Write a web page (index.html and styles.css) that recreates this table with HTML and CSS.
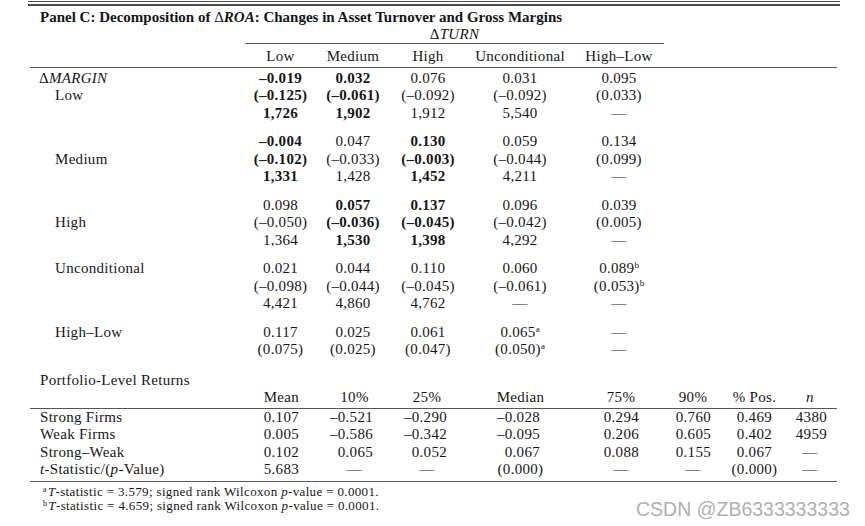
FILE: index.html
```html
<!DOCTYPE html>
<html lang="en">
<head>
<meta charset="utf-8">
<title>Panel C</title>
<link rel="stylesheet" href="styles.css">
</head>
<body>
<div class="page">
  <div class="toprule"></div>
  <div class="title">Panel C: Decomposition of <span class="delta">Δ</span><i>ROA</i>: Changes in Asset Turnover and Gross Margins</div>

  <div class="trow thead1"><span class="turn">Δ<i>TURN</i></span></div>
  <div class="trow thead2"><span></span><span>Low</span><span>Medium</span><span>High</span><span>Unconditional</span><span>High–Low</span></div>

  <div class="grp first">
    <div class="trow"><span class="lab top">Δ<i>MARGIN</i></span><span class="b">–0.019</span><span class="b">0.032</span><span>0.076</span><span>0.031</span><span>0.095</span></div>
    <div class="trow"><span class="lab">Low</span><span class="b">(–0.125)</span><span class="b">(–0.061)</span><span>(–0.092)</span><span>(–0.092)</span><span>(0.033)</span></div>
    <div class="trow"><span class="lab"></span><span class="b">1,726</span><span class="b">1,902</span><span>1,912</span><span>5,540</span><span>—</span></div>
  </div>

  <div class="grp">
    <div class="trow"><span class="lab"></span><span class="b">–0.004</span><span>0.047</span><span class="b">0.130</span><span>0.059</span><span>0.134</span></div>
    <div class="trow"><span class="lab">Medium</span><span class="b">(–0.102)</span><span>(–0.033)</span><span class="b">(–0.003)</span><span>(–0.044)</span><span>(0.099)</span></div>
    <div class="trow"><span class="lab"></span><span class="b">1,331</span><span>1,428</span><span class="b">1,452</span><span>4,211</span><span>—</span></div>
  </div>

  <div class="grp">
    <div class="trow"><span class="lab"></span><span>0.098</span><span class="b">0.057</span><span class="b">0.137</span><span>0.096</span><span>0.039</span></div>
    <div class="trow"><span class="lab">High</span><span>(–0.050)</span><span class="b">(–0.036)</span><span class="b">(–0.045)</span><span>(–0.042)</span><span>(0.005)</span></div>
    <div class="trow"><span class="lab"></span><span>1,364</span><span class="b">1,530</span><span class="b">1,398</span><span>4,292</span><span>—</span></div>
  </div>

  <div class="grp">
    <div class="trow"><span class="lab">Unconditional</span><span>0.021</span><span>0.044</span><span>0.110</span><span>0.060</span><span>0.089<span class="sup">b</span></span></div>
    <div class="trow"><span class="lab"></span><span>(–0.098)</span><span>(–0.044)</span><span>(–0.045)</span><span>(–0.061)</span><span>(0.053)<span class="sup">b</span></span></div>
    <div class="trow"><span class="lab"></span><span>4,421</span><span>4,860</span><span>4,762</span><span>—</span><span>—</span></div>
  </div>

  <div class="grp">
    <div class="trow"><span class="lab">High–Low</span><span>0.117</span><span>0.025</span><span>0.061</span><span>0.065<span class="sup">a</span></span><span>—</span></div>
    <div class="trow"><span class="lab"></span><span>(0.075)</span><span>(0.025)</span><span>(0.047)</span><span>(0.050)<span class="sup">a</span></span><span>—</span></div>
  </div>

  <div class="ptitle">Portfolio-Level Returns</div>
  <div class="brow bhead"><span></span><span>Mean</span><span>10%</span><span>25%</span><span>Median</span><span>75%</span><span>90%</span><span>% Pos.</span><span><i>n</i></span></div>
  <div class="bbody">
    <div class="brow"><span class="lab">Strong Firms</span><span class="n">0.107</span><span class="n">–0.521</span><span class="n">–0.290</span><span class="n">–0.028</span><span class="n">0.294</span><span class="n">0.760</span><span class="n">0.469</span><span class="n">4380</span></div>
    <div class="brow"><span class="lab">Weak Firms</span><span class="n">0.005</span><span class="n">–0.586</span><span class="n">–0.342</span><span class="n">–0.095</span><span class="n">0.206</span><span class="n">0.605</span><span class="n">0.402</span><span class="n">4959</span></div>
    <div class="brow"><span class="lab">Strong–Weak</span><span class="n">0.102</span><span class="n">0.065</span><span class="n">0.052</span><span class="n">0.067</span><span class="n">0.088</span><span class="n">0.155</span><span class="n">0.067</span><span>—</span></div>
    <div class="brow"><span class="lab"><i>t</i>-Statistic/(<i>p</i>-Value)</span><span class="n">5.683</span><span>—</span><span>—</span><span>(0.000)</span><span>—</span><span>—</span><span>(0.000)</span><span>—</span></div>
  </div>
  <div class="notes">
    <div><span class="fsup">a</span><i>T</i>-statistic = 3.579; signed rank Wilcoxon <i>p</i>-value = 0.0001.</div>
    <div><span class="fsup">b</span><i>T</i>-statistic = 4.659; signed rank Wilcoxon <i>p</i>-value = 0.0001.</div>
  </div>
</div>
<div class="watermark">CSDN @ZB6333333333</div>
</body>
</html>
```

FILE: styles.css
```css
html, body {
  margin: 0;
  padding: 0;
  background: #ffffff;
}
body {
  padding-top: 1px;
  font-family: "Liberation Serif", "Times New Roman", serif;
  font-size: 15px;
  color: #161616;
  letter-spacing: 0.3px;
}
.page {
  margin-left: 30px;
  width: 807px;
}
.toprule {
  margin: 0 -3px 0 -2px;
  height: 2px;
  border-top: 1px solid #555;
  border-bottom: 2px solid #4a4a4a;
}
.title {
  margin-top: 3px;
  padding-left: 10px;
  line-height: 17px;
  font-weight: bold;
  letter-spacing: 0;
}
.delta {
  font-weight: normal;
}
.trow {
  display: grid;
  grid-template-columns: 215px 71px 74px 76px 108px 90px 1fr;
  text-align: center;
  line-height: 17.5px;
  white-space: nowrap;
}
.thead1 {
  line-height: 17px;
}
.turn {
  grid-column: 2 / 7;
  border-bottom: 1px solid #555;
}
.thead2 {
  line-height: 17px;
  padding-top: 4px;
  padding-bottom: 2px;
  border-bottom: 1px solid #555;
}
.grp {
  margin-top: 11px;
}
.grp.first {
  margin-top: 1.5px;
}
.lab {
  text-align: left;
  padding-left: 25px;
}
.lab.top {
  padding-left: 9px;
}
.b {
  font-weight: bold;
}
.sup {
  font-size: 9px;
  vertical-align: 5px;
  line-height: 0;
  letter-spacing: 0;
}
.ptitle {
  margin-top: 13px;
  padding-left: 10px;
  line-height: 17px;
}
.brow {
  display: grid;
  grid-template-columns: 219px 65px 81px 64px 123px 78px 66px 57px 54px;
  text-align: center;
  white-space: nowrap;
  line-height: 17.3px;
}
.brow .lab {
  padding-left: 10px;
}
.bhead {
  line-height: 17px;
  padding-bottom: 2.5px;
  border-bottom: 1px solid #555;
}
.bhead > :nth-child(2) {
  text-align: right;
  padding-right: 15px;
}
.bbody {
  padding-bottom: 3px;
  border-bottom: 1px solid #555;
}
.brow .n {
  text-align: right;
}
.brow > .n:nth-child(2) { padding-right: 15px; }
.brow > .n:nth-child(3) { padding-right: 22px; }
.brow > .n:nth-child(4) { padding-right: 12px; }
.brow > .n:nth-child(5) { padding-right: 42px; }
.brow > .n:nth-child(6) { padding-right: 21px; }
.brow > .n:nth-child(7) { padding-right: 15px; }
.brow > .n:nth-child(8) { padding-right: 11px; }
.brow > .n:nth-child(9) { padding-right: 10px; }
.notes {
  margin-top: 3px;
  padding-left: 13px;
  font-size: 13px;
  line-height: 14px;
  letter-spacing: 0.35px;
}
.fsup {
  font-size: 8px;
  vertical-align: 4px;
  line-height: 0;
  margin-right: 1px;
}
.watermark {
  position: absolute;
  left: 636px;
  top: 499px;
  font-family: "Liberation Sans", Arial, sans-serif;
  font-size: 19.5px;
  line-height: 20px;
  color: #b0b0b0;
  letter-spacing: 0;
  white-space: nowrap;
}
```
